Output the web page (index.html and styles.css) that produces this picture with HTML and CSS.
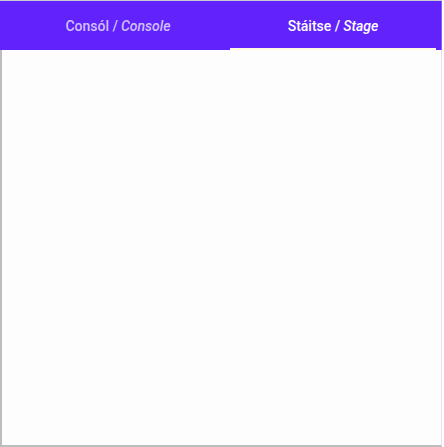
FILE: index.html
```html
<!DOCTYPE html>
<html>
<head>
<meta charset="utf-8">
<link rel="stylesheet" href="styles.css">
</head>
<body>
<div class="frame">
  <div class="tabs">
    <div class="tab tab-left">Consól / <i>Console</i></div>
    <div class="tab tab-right active">Stáitse / <i>Stage</i></div>
  </div>
  <div class="panel"></div>
</div>
</body>
</html>
```
FILE: styles.css
```css
html, body {
  margin: 0;
  padding: 0;
  background: #fdfdfd;
}
.frame {
  width: 442px;
  height: 447px;
  display: flex;
  flex-direction: column;
  border-top: 1px solid #c9c9d2;
  box-sizing: border-box;
}
.tabs {
  display: flex;
  height: 49px;
  width: 442px;
  background: #6122fc;
  border-right: 1px solid #8a5cfb;
  box-sizing: border-box;
  font-family: Roboto, "Liberation Sans", sans-serif;
  font-size: 14px;
  font-weight: 500;
}
.tab {
  position: relative;
  display: flex;
  align-items: center;
  justify-content: center;
  color: rgba(255, 255, 255, 0.72);
  box-sizing: border-box;
}
.tab i {
  font-style: italic;
  margin-left: 3px;
}
.tab-left {
  width: 230px;
  padding-left: 6px;
}
.tab-right {
  flex: 1;
  padding-right: 5px;
}
.tab.active {
  color: #ffffff;
}
.tab.active::after {
  content: "";
  position: absolute;
  left: 0;
  right: 5px;
  bottom: 0;
  height: 2px;
  background: #fff9e6;
}
.panel {
  flex: 1;
  background: #fdfdfd;
  border-left: 2px solid #bdbdbd;
  border-bottom: 2px solid #bdbdbd;
  border-right: 1px solid #e6e0f8;
}
```
